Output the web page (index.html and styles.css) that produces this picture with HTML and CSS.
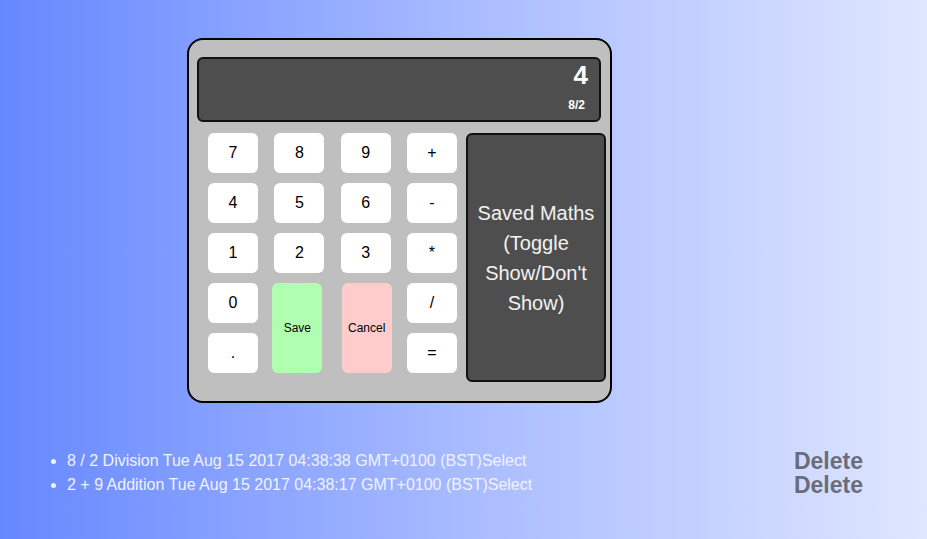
FILE: index.html
```html
<!DOCTYPE html>
<html>
<head>
<meta charset="utf-8">
<link rel="stylesheet" href="styles.css">
</head>
<body>
<div class="page">
  <div class="calc">
    <div class="display">
      <div class="result">4</div>
      <div class="expr">8/2</div>
    </div>
    <div class="body">
      <div class="keys">
        <div class="key">7</div>
        <div class="key">8</div>
        <div class="key">9</div>
        <div class="key">+</div>
        <div class="key">4</div>
        <div class="key">5</div>
        <div class="key">6</div>
        <div class="key">-</div>
        <div class="key">1</div>
        <div class="key">2</div>
        <div class="key">3</div>
        <div class="key">*</div>
        <div class="key">0</div>
        <div class="key small save">Save</div>
        <div class="key small cancel">Cancel</div>
        <div class="key">/</div>
        <div class="key">.</div>
        <div class="key">=</div>
      </div>
      <div class="saved">Saved Maths (Toggle Show/Don't Show)</div>
    </div>
  </div>
</div>
<ul class="history">
  <li><span class="del">Delete</span>8 / 2 Division Tue Aug 15 2017 04:38:38 GMT+0100 (BST)Select</li>
  <li><span class="del">Delete</span>2 + 9 Addition Tue Aug 15 2017 04:38:17 GMT+0100 (BST)Select</li>
</ul>
</body>
</html>
```
FILE: styles.css
```css
html, body {
  margin: 0;
  height: 100%;
}
body {
  background: linear-gradient(to right, #6688ff 0%, #a8bbff 50%, #dfe6ff 100%);
  font-family: "Liberation Sans", Arial, sans-serif;
}
.page {
  padding: 38px 0 0 187px;
}
.calc {
  box-sizing: border-box;
  width: 425px;
  border: 2px solid #000;
  border-radius: 16px;
  background: #bfbfbf;
  padding: 17px 4px 19px 8px;
}
.display {
  box-sizing: border-box;
  height: 65px;
  margin-right: 5px;
  border: 2px solid #111;
  border-radius: 6px;
  background: #4e4e4e;
  color: #fff;
  display: flex;
  flex-direction: column;
  align-items: flex-end;
  padding: 1px 11px 0 0;
}
.result {
  font-size: 26px;
  font-weight: bold;
  line-height: 30px;
}
.expr {
  font-size: 12px;
  font-weight: bold;
  line-height: 14px;
  margin-top: 8px;
  margin-right: 3px;
}
.body {
  display: flex;
  margin-top: 11px;
}
.keys {
  margin-left: 11px;
  display: grid;
  grid-template-columns: repeat(4, 50px);
  grid-template-rows: repeat(5, 40px);
  column-gap: 16.33px;
  row-gap: 10px;
}
.key {
  background: #fff;
  border-radius: 6px;
  display: flex;
  align-items: center;
  justify-content: center;
  font-size: 16px;
  color: #000;
}
.key.small {
  font-size: 12px;
  grid-row: span 2;
}
.save {
  background: #b0ffb0;
  margin-left: -2px;
  margin-right: 2px;
}
.cancel {
  background: #ffcccc;
  margin-left: 1px;
  margin-right: -1px;
}
.saved {
  box-sizing: border-box;
  width: 140px;
  height: 249px;
  margin-left: 9px;
  border: 2px solid #111;
  border-radius: 6px;
  background: #4e4e4e;
  color: #f2f2f2;
  font-size: 20px;
  line-height: 30px;
  text-align: center;
  display: flex;
  align-items: center;
  justify-content: center;
  padding: 0 6px;
}
.history {
  margin: 46px 64px 0 0;
  padding: 0 0 0 67px;
  color: #f0f3ff;
  font-size: 16px;
  line-height: 24px;
}
.del {
  float: right;
  font-size: 23px;
  font-weight: bold;
  color: #6a6d79;
}
```
